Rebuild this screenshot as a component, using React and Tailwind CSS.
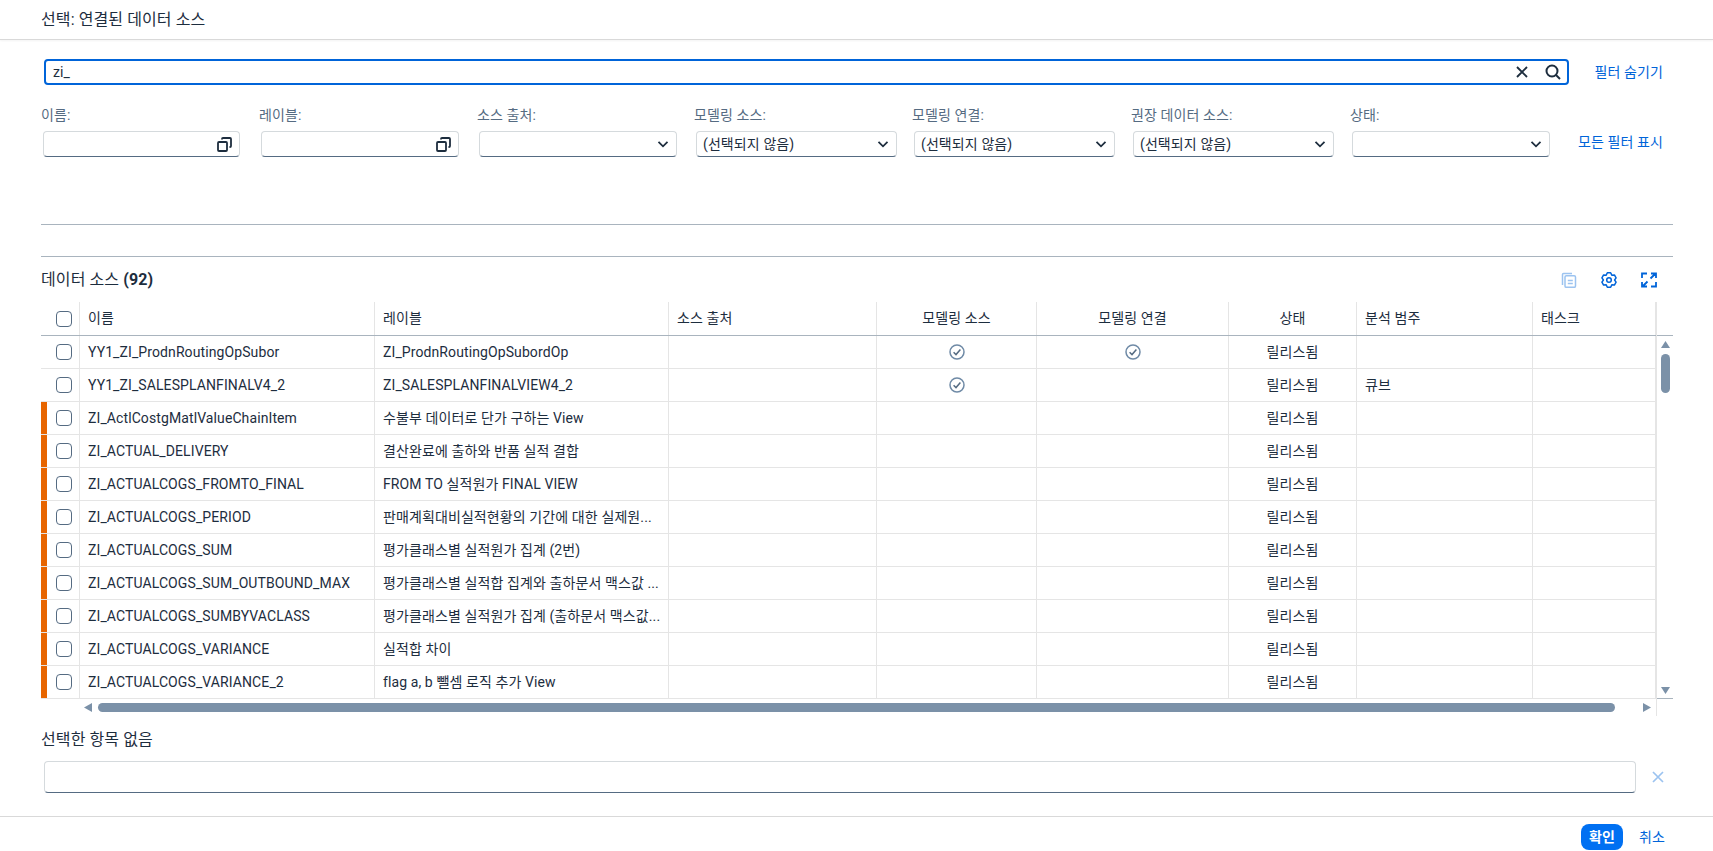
import React from "react";

const COLS = [
  { w: "w-[295px]", align: "text-left pl-2" },
  { w: "w-[294px]", align: "text-left pl-2" },
  { w: "w-[208px]", align: "text-left pl-2" },
  { w: "w-[160px]", align: "text-center" },
  { w: "w-[192px]", align: "text-center" },
  { w: "w-[128px]", align: "text-center" },
  { w: "w-[176px]", align: "text-left pl-2" },
  { w: "w-[123px]", align: "text-left pl-2" },
];

const HEAD = ["이름", "레이블", "소스 출처", "모델링 소스", "모델링 연결", "상태", "분석 범주", "태스크"];

const ROWS = [
  { n: "YY1_ZI_ProdnRoutingOpSubor", l: "ZI_ProdnRoutingOpSubordOp", ms: true, mc: true, c: "" },
  { n: "YY1_ZI_SALESPLANFINALV4_2", l: "ZI_SALESPLANFINALVIEW4_2", ms: true, c: "큐브" },
  { n: "ZI_ActlCostgMatlValueChainItem", l: "수불부 데이터로 단가 구하는 View", o: true },
  { n: "ZI_ACTUAL_DELIVERY", l: "결산완료에 출하와 반품 실적 결합", o: true },
  { n: "ZI_ACTUALCOGS_FROMTO_FINAL", l: "FROM TO 실적원가 FINAL VIEW", o: true },
  { n: "ZI_ACTUALCOGS_PERIOD", l: "판매계획대비실적현황의 기간에 대한 실제원...", o: true },
  { n: "ZI_ACTUALCOGS_SUM", l: "평가클래스별 실적원가 집계 (2번)", o: true },
  { n: "ZI_ACTUALCOGS_SUM_OUTBOUND_MAX", l: "평가클래스별 실적합 집계와 출하문서 맥스값 ...", o: true },
  { n: "ZI_ACTUALCOGS_SUMBYVACLASS", l: "평가클래스별 실적원가 집계 (출하문서 맥스값...", o: true },
  { n: "ZI_ACTUALCOGS_VARIANCE", l: "실적합 차이", o: true },
  { n: "ZI_ACTUALCOGS_VARIANCE_2", l: "flag a, b 뺄셈 로직 추가 View", o: true },
];

const FILTERS = [
  { label: "이름:", w: "w-[197px]", icon: "vh", mr: "mr-[21px]" },
  { label: "레이블:", w: "w-[198px]", icon: "vh", mr: "mr-[20px]" },
  { label: "소스 출처:", w: "w-[198px]", mr: "mr-[19px]" },
  { label: "모델링 소스:", w: "w-[201px]", v: "(선택되지 않음)", mr: "mr-[17px]" },
  { label: "모델링 연결:", w: "w-[201px]", v: "(선택되지 않음)", mr: "mr-[18px]" },
  { label: "권장 데이터 소스:", w: "w-[201px]", v: "(선택되지 않음)", mr: "mr-[18px]" },
  { label: "상태:", w: "w-[198px]", mr: "mr-0" },
];

function ValueHelp() {
  return (
    <svg width="15" height="15" viewBox="0 0 15 15" fill="none" stroke="#1d2d3e" strokeWidth="1.8">
      <rect x="1" y="5" width="9" height="9" rx="1" />
      <path d="M5 2.500V2c0-.6.4-1 1-1h7c.6 0 1 .4 1 1v7c0 .6-.4 1-1 1h-.5" />
    </svg>
  );
}

function Chevron() {
  return (
    <svg width="12" height="12" viewBox="0 0 12 12" fill="none" stroke="#1d2d3e" strokeWidth="1.8">
      <path d="M1.500 3.800 6 8.300l4.500-4.500" />
    </svg>
  );
}

function CheckCircle() {
  return (
    <svg width="16" height="16" viewBox="0 0 16 16" fill="none" className="inline-block align-middle">
      <circle cx="8" cy="8" r="7" stroke="#6f8aa6" strokeWidth="1.5" />
      <path d="M4.600 8.300 7 10.600l4.400-5" stroke="#556b82" strokeWidth="1.5" />
    </svg>
  );
}

function Checkbox() {
  return <div className="w-4 h-4 rounded-[4px] border border-[#556b82] bg-white" />;
}

function FilterField({ f }) {
  return (
    <div className={`${f.w} ${f.mr} shrink-0`}>
      <div className="h-[18px] leading-[18px] text-[14px] text-[#556b82] -ml-[2px] whitespace-nowrap">{f.label}</div>
      <div className="mt-[7px] h-[26px] rounded-[4px] border border-[#d5dadd] border-b-[#556b82] bg-white flex items-center justify-between pl-[6px] pr-[7px] text-[14px] text-[#1d2d3e]">
        <span className="whitespace-nowrap">{f.v || ""}</span>
        <span className="flex items-center">{f.icon === "vh" ? <ValueHelp /> : <Chevron />}</span>
      </div>
    </div>
  );
}

function Cell({ i, children }) {
  const c = COLS[i];
  return (
    <div className={`${c.w} ${c.align} shrink-0 h-full border-r border-[#e5e5e5] flex items-center ${c.align.includes("center") ? "justify-center" : ""} overflow-hidden whitespace-nowrap`}>
      {children}
    </div>
  );
}

function Row({ r }) {
  return (
    <div className="h-[33px] flex border-b border-[#e5e5e5] text-[14px] text-[#1d2d3e]">
      <div className="w-[39px] shrink-0 h-full border-r border-[#e5e5e5] flex items-center">
        <div className={`w-[6px] h-full shrink-0 ${r.o ? "bg-[#e76500]" : ""}`} />
        <div className="ml-[9px]"><Checkbox /></div>
      </div>
      <Cell i={0}>{r.n}</Cell>
      <Cell i={1}>{r.l}</Cell>
      <Cell i={2} />
      <Cell i={3}>{r.ms && <CheckCircle />}</Cell>
      <Cell i={4}>{r.mc && <CheckCircle />}</Cell>
      <Cell i={5}>릴리스됨</Cell>
      <Cell i={6}>{r.c}</Cell>
      <Cell i={7} />
    </div>
  );
}

export default function App() {
  return (
    <div
      className="w-[1713px] h-[851px] bg-white flex flex-col overflow-hidden text-[#1d2d3e] tracking-[0.1px]"
      style={{ fontFamily: 'Roboto,"Noto Sans CJK KR",sans-serif' }}
    >
      {/* Dialog title */}
      <div className="h-[40px] shrink-0 border-b border-[#d9d9d9] shadow-[0_1px_2px_rgba(0,0,0,0.05)] flex items-center pl-[41px] text-[16px] whitespace-pre">
        선택: 연결된 데이터 소스
      </div>

      {/* Filter bar */}
      <div className="h-[185px] shrink-0 border-b border-[#a9b4be] mx-[41px] w-[1632px]">
        <div className="flex items-center mt-[19px]">
          <div className="ml-[3px] w-[1525px] h-[26px] rounded-[4px] border-2 border-[#0064d9] flex items-center pl-[7px] pr-[6px] text-[14px]">
            <span className="flex-1">zi_</span>
            <svg width="14" height="14" viewBox="0 0 14 14" fill="none" stroke="#1d2d3e" strokeWidth="1.9" className="mr-[16px]">
              <path d="M2 2l10 10M12 2 2 12" />
            </svg>
            <svg width="16" height="16" viewBox="0 0 16 16" fill="none" stroke="#1d2d3e" strokeWidth="2">
              <circle cx="7" cy="7" r="5.500" />
              <path d="M11 11l4 4" />
            </svg>
          </div>
          <span className="ml-auto text-[14px] text-[#0064d9] whitespace-nowrap mr-[10px]">필터 숨기기</span>
        </div>
        <div className="flex items-start mt-[21px] ml-[2px]">
          {FILTERS.map((f) => (
            <FilterField key={f.label} f={f} />
          ))}
          <span className="ml-auto mt-[26px] mr-[10px] text-[14px] text-[#0064d9] whitespace-nowrap">모든 필터 표시</span>
        </div>
      </div>

      {/* Table section */}
      <div className="mx-[41px] w-[1632px] mt-[31px] shrink-0 border-t border-[#a9b4be]">
        <div className="h-[45px] flex items-center justify-between pr-[16px]">
          <div className="text-[16px]">
            데이터 소스 <span className="font-bold">(92)</span>
          </div>
          <div className="flex items-center gap-[24px]">
            <svg width="16" height="16" viewBox="0 0 16 16" fill="none" stroke="#9cc3f0" strokeWidth="1.5">
              <path d="M1.500 13V2.500c0-.6.4-1 1-1H11" />
              <rect x="4" y="3.700" width="10.500" height="11.600" rx="1.400" />
              <path d="M6.800 8.500h5M6.800 11.500h5" />
            </svg>
            <svg width="16" height="16" viewBox="0 0 16 16" fill="none" stroke="#0064d9" strokeWidth="1.5" strokeLinejoin="round">
              <polygon points="6.340,0.790 9.660,0.790 10.800,3.150 13.410,2.950 15.080,5.840 13.600,8 15.080,10.160 13.410,13.050 10.800,12.850 9.660,15.210 6.340,15.210 5.200,12.850 2.590,13.050 0.920,10.160 2.400,8 0.920,5.840 2.590,2.950 5.200,3.150" />
              <circle cx="8" cy="8" r="2.300" />
            </svg>
            <svg width="16" height="16" viewBox="0 0 16 16" fill="none" stroke="#0064d9" strokeWidth="1.8">
              <path d="M1 6V1.500h5M10 1.500h5V6M15 10v4.500h-5M6 14.500H1V10M9.500 6.500 14.500 1.500M6.500 9.500l-5 5" />
            </svg>
          </div>
        </div>

        <div className="flex">
          {/* Grid */}
          <div className="w-[1615px] shrink-0">
            <div className="h-[34px] flex border-b border-[#a9b4be] text-[14px] text-[#1d2d3e]">
              <div className="w-[39px] shrink-0 h-full border-r border-[#e5e5e5] flex items-center pl-[15px]">
                <Checkbox />
              </div>
              {HEAD.map((h, i) => (
                <Cell key={h} i={i}>{h}</Cell>
              ))}
            </div>
            {ROWS.map((r) => (
              <Row key={r.n} r={r} />
            ))}
            {/* Horizontal scrollbar */}
            <div className="h-[17px] flex items-center">
              <svg width="8" height="9" viewBox="0 0 8 9" className="ml-[43px]"><path d="M8 0v9L0 4.500z" fill="#7b91a8" /></svg>
              <div className="ml-[6px] w-[1517px] h-[9px] rounded-full bg-[#7b91a8]" />
              <svg width="8" height="9" viewBox="0 0 8 9" className="ml-[28px]"><path d="M0 0v9l8-4.500z" fill="#7b91a8" /></svg>
            </div>
          </div>
          {/* Vertical scrollbar */}
          <div className="w-[17px] shrink-0 border-l border-[#e5e5e5] flex flex-col">
            <div className="h-[34px] border-b border-[#a9b4be] shrink-0" />
            <div className="h-[363px] border-b border-[#a9b4be] shrink-0 flex flex-col items-center pt-[5px]">
              <svg width="9" height="7" viewBox="0 0 9 7"><path d="M0 7h9L4.500 0z" fill="#7b91a8" /></svg>
              <div className="mt-[6px] w-[9px] h-[39px] rounded-full bg-[#7b91a8]" />
              <svg width="9" height="7" viewBox="0 0 9 7" className="mt-auto mb-[4px]"><path d="M0 0h9L4.500 7z" fill="#7b91a8" /></svg>
            </div>
          </div>
        </div>
      </div>

      {/* Selected tokens */}
      <div className="mx-[41px] w-[1632px] shrink-0 mt-[14px]">
        <div className="h-[20px] leading-[20px] text-[16px]">선택한 항목 없음</div>
        <div className="flex items-center mt-[11px] ml-[3px]">
          <div className="w-[1592px] h-[32px] rounded-[4px] border border-[#d5dadd] border-b-[#556b82] bg-white" />
          <svg width="14" height="14" viewBox="0 0 14 14" fill="none" stroke="#9cc3f0" strokeWidth="1.7" className="ml-[15px]">
            <path d="M2 2l10 10M12 2 2 12" />
          </svg>
        </div>
      </div>

      {/* Footer */}
      <div className="mt-[23px] flex-1 border-t border-[#d9d9d9] flex items-start justify-end pr-[48px] pt-[7px]">
        <button className="w-[42px] h-[26px] rounded-[8px] bg-[#0070f2] text-white text-[14px] font-bold">확인</button>
        <span className="ml-[16px] h-[26px] flex items-center text-[14px] text-[#0064d9]">취소</span>
      </div>
    </div>
  );
}
